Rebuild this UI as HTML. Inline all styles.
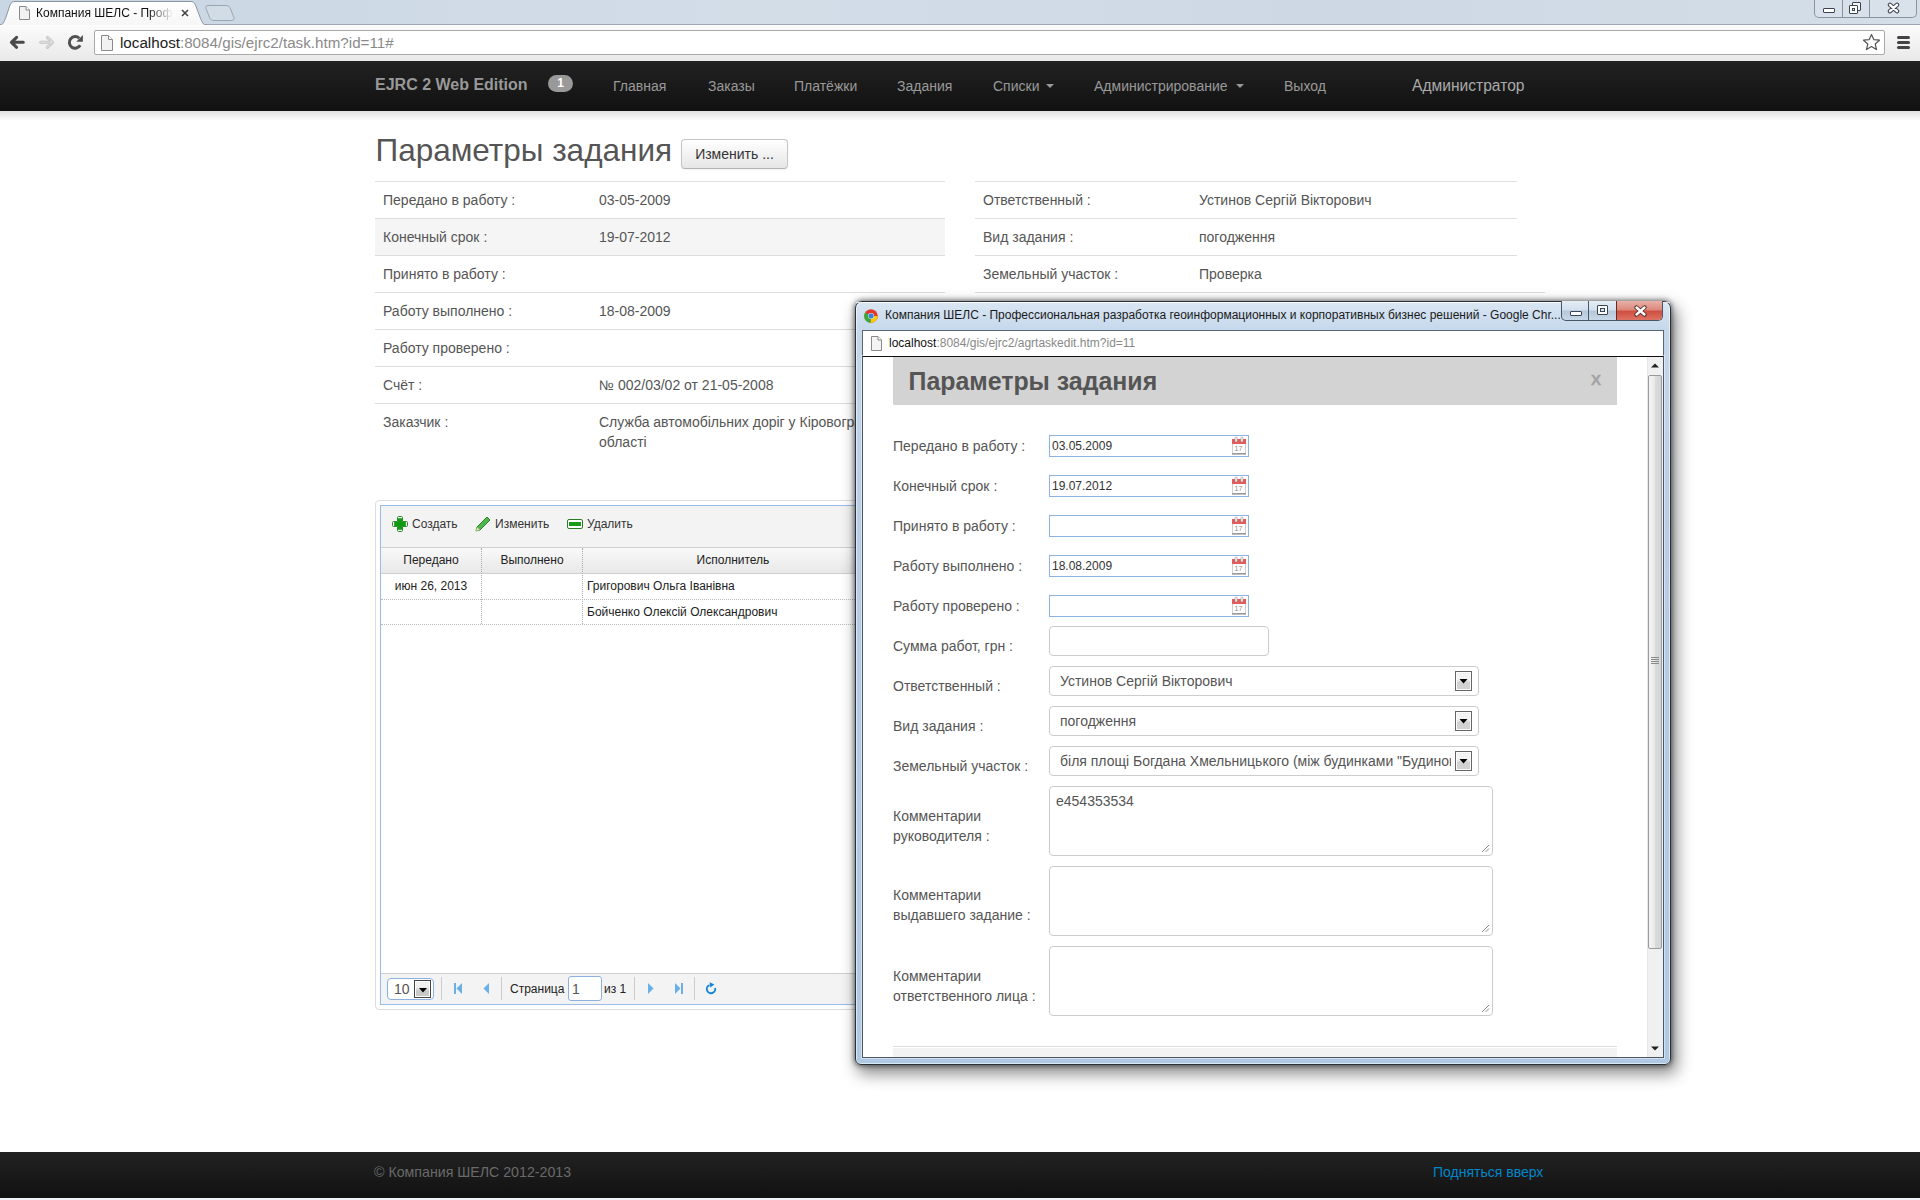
<!DOCTYPE html>
<html><head><meta charset="utf-8">
<style>
*{box-sizing:border-box}
html,body{margin:0;padding:0;width:1920px;height:1200px;overflow:hidden;background:#fff;font-family:"Liberation Sans",sans-serif;position:relative}
.a{position:absolute;white-space:nowrap}
/* browser chrome */
#tabstrip{left:0;top:0;width:1920px;height:25px;background:linear-gradient(90deg,#c9d6e3 0%,#d3dde8 40%,#cdd8e4 70%,#d4dee8 100%)}
#toolbar{left:0;top:24px;width:1920px;height:37px;background:linear-gradient(#fbfbfb,#e9e9e9);border-top:1px solid #9aa6b2}
#omni{left:94px;top:30px;width:1791px;height:25px;background:#fff;border:1px solid #a9a9a9;border-radius:2px}
#navbar{left:0;top:61px;width:1920px;height:50px;background:linear-gradient(#222,#111)}
#navshadow{left:0;top:111px;width:1920px;height:10px;background:linear-gradient(rgba(0,0,0,.12),rgba(0,0,0,0))}
.nav{color:#999;font-size:14px;top:76px;line-height:20px}
.lbl{font-size:14px;color:#555;line-height:20px}
.hr{height:1px;background:#ddd}
.gt{font-size:12px;color:#222;line-height:16px}
.gt2{font-size:12px;color:#333;line-height:16px}
#footer{left:0;top:1152px;width:1920px;height:46px;background:linear-gradient(#222,#111)}
</style></head><body>
<!-- TAB STRIP -->
<div class="a" id="tabstrip"></div>
<div class="a" id="toolbar"></div>
<div class="a" id="omni"></div>
<div class="a" style="left:120px;top:33px;font-size:15.2px;line-height:19px;color:#222">localhost<span style="color:#8a8a8a">:8084/gis/ejrc2/task.htm?id=11#</span></div>


<svg class="a" style="left:0;top:0" width="240" height="26" viewBox="0 0 240 26">
 <defs><linearGradient id="tg" x1="0" y1="0" x2="0" y2="1"><stop offset="0" stop-color="#ffffff"/><stop offset="1" stop-color="#f6f6f6"/></linearGradient></defs>
 <path d="M-2 25.5 C3 25.5 4 22 6 17 L10 5 C11.5 2 12.5 1.5 16 1.5 H190 C193 1.5 194 2 195.5 5 L200 17 C202 22 203 25.5 208 25.5 Z" fill="url(#tg)" stroke="#8a96a3" stroke-width="1"/>
 <path d="M208 5.5 H226 C228.5 5.5 229.5 6.5 230.5 9 L234 17.5 C234.5 19.5 233.5 20.5 231.5 20.5 H214 C211.5 20.5 210.5 19.5 209.5 17.5 L206 8.5 C205.5 6.5 206 5.5 208 5.5Z" fill="#d2dce6" stroke="#9aa6b2" stroke-width="1"/>
</svg>
<div class="a" style="left:0;top:25px;width:1920px;height:1px;background:#fdfdfd"></div>
<svg class="a" style="left:19px;top:6px" width="11" height="14" viewBox="0 0 11 14"><path d="M.5 .5h6.5l3.5 3.5v9.5H.5z" fill="#f2f2f2" stroke="#8a8a8a"/><path d="M7 .5V4h3.5" fill="#fff" stroke="#8a8a8a"/></svg>
<div class="a" style="left:36px;top:5px;width:137px;overflow:hidden;font-size:12px;line-height:16px;color:#111;-webkit-mask-image:linear-gradient(90deg,#000 82%,transparent)">Компания ШЕЛС - Профессиональная</div>
<svg class="a" style="left:181px;top:9px" width="8" height="8" viewBox="0 0 8 8"><path d="M1 1l6 6M7 1L1 7" stroke="#444" stroke-width="1.6"/></svg>
<!-- window caption buttons -->
<div class="a" style="left:1814px;top:0;width:103px;height:18px;border:1px solid #8993a0;border-top:none;border-radius:0 0 5px 5px;background:rgba(220,228,236,.6)"></div>
<div class="a" style="left:1842px;top:0;width:1px;height:17px;background:#8993a0"></div>
<div class="a" style="left:1869px;top:0;width:1px;height:17px;background:#8993a0"></div>
<div class="a" style="left:1823px;top:8px;width:12px;height:5px;border:1px solid #3c4350;border-radius:1px;background:#fff"></div>
<div class="a" style="left:1852px;top:2px;width:9px;height:9px;border:1px solid #3c4350;border-radius:1px;background:#f4f4f4"></div>
<div class="a" style="left:1849px;top:5px;width:9px;height:9px;border:1px solid #3c4350;border-radius:1px;background:#fff"><div class="a" style="left:2px;top:2px;width:3px;height:3px;border:1px solid #3c4350"></div></div>
<svg class="a" style="left:1887px;top:2px" width="13" height="12" viewBox="0 0 13 12"><path d="M3 2.8l7 6.4M10 2.8l-7 6.4" stroke="#3c4350" stroke-width="4.4" stroke-linecap="round"/><path d="M3 2.8l7 6.4M10 2.8l-7 6.4" stroke="#fff" stroke-width="2.4" stroke-linecap="round"/></svg>
<!-- toolbar icons -->
<svg class="a" style="left:9px;top:35px" width="17" height="15" viewBox="0 0 17 15"><path d="M14.3 7.3H3M7.6 2.3L2.4 7.3l5.2 5" fill="none" stroke="#4a4a4a" stroke-width="3" stroke-linecap="round" stroke-linejoin="round"/></svg>
<svg class="a" style="left:38px;top:35px" width="17" height="15" viewBox="0 0 17 15"><path d="M2.6 7.3H14M9.4 2.3l5.2 5-5.2 5" fill="none" stroke="#c4c4c4" stroke-width="3" stroke-linecap="round" stroke-linejoin="round"/><path d="M2.6 7.3H14M9.4 2.3l5.2 5-5.2 5" fill="none" stroke="#dcdcdc" stroke-width="1.4" stroke-linecap="round" stroke-linejoin="round"/></svg>
<svg class="a" style="left:67px;top:34px" width="17" height="17" viewBox="0 0 17 17"><path d="M13.17 11.3A5.8 5.8 0 1 1 12.25 4.3" fill="none" stroke="#505050" stroke-width="3"/><path d="M9.2 7.8H15.9V1.1z" fill="#505050"/></svg>
<svg class="a" style="left:101px;top:35px" width="12" height="16" viewBox="0 0 12 16"><path d="M.5 .5h7l4 4v11H.5z" fill="#f2f2f2" stroke="#8a8a8a"/><path d="M7.5 .5V4.5h4" fill="#fff" stroke="#8a8a8a"/></svg>
<svg class="a" style="left:1862px;top:33px" width="19" height="19" viewBox="0 0 19 19"><path d="M9.5 1.5l2.4 5.2 5.6.5-4.3 3.8 1.3 5.6-5-3-5 3 1.3-5.6L1.5 7.2l5.6-.5z" fill="#fff" stroke="#555" stroke-width="1.2" stroke-linejoin="round"/></svg>
<div class="a" style="left:1897px;top:36px;width:13px;height:3px;border-radius:1.5px;background:#444;box-shadow:0 5px 0 #444,0 10px 0 #444"></div>
<!-- bottom strip -->
<div class="a" style="left:0;top:1198px;width:1920px;height:2px;background:#eef2f6"></div>

<!-- NAVBAR -->
<div class="a" id="navbar"></div>
<div class="a" id="navshadow"></div>
<div class="a" style="left:375px;top:75px;font-size:16px;font-weight:bold;color:#999;line-height:20px">EJRC 2 Web Edition</div>
<div class="a" style="left:548px;top:75px;width:25px;height:17px;border-radius:9px;background:#999;color:#fff;font-size:12px;font-weight:bold;text-align:center;line-height:17px">1</div>
<div class="a nav" style="left:613px">Главная</div>
<div class="a nav" style="left:708px">Заказы</div>
<div class="a nav" style="left:794px">Платёжки</div>
<div class="a nav" style="left:897px">Задания</div>
<div class="a nav" style="left:993px">Списки</div>
<div class="a nav" style="left:1094px">Администрирование</div>
<div class="a nav" style="left:1284px">Выход</div>
<div class="a" style="left:1412px;top:76px;font-size:15.6px;color:#aaa;line-height:20px">Администратор</div>


<!-- nav carets -->
<svg class="a" style="left:1046px;top:84px" width="8" height="4"><path d="M0 0h8L4 4z" fill="#999"/></svg>
<svg class="a" style="left:1236px;top:84px" width="8" height="4"><path d="M0 0h8L4 4z" fill="#999"/></svg>

<!-- MAIN CONTENT -->
<div class="a" style="left:375.5px;top:130px;font-size:31.5px;color:#555;line-height:40px">Параметры задания</div>
<div class="a" style="left:681px;top:139px;width:107px;height:30px;border:1px solid #c5c5c5;border-bottom-color:#b3b3b3;border-radius:4px;background:linear-gradient(#fff,#e6e6e6);box-shadow:inset 0 1px 0 rgba(255,255,255,.2),0 1px 2px rgba(0,0,0,.05);font-size:14px;color:#333;text-align:center;line-height:28px">Изменить ...</div>
<div class="a" style="left:375px;top:218px;width:570px;height:37px;background:#f5f5f5"></div>
<div class="a hr" style="left:375px;top:181px;width:570px"></div>
<div class="a lbl" style="left:383px;top:190px">Передано в работу :</div>
<div class="a lbl" style="left:599px;top:190px">03-05-2009</div>
<div class="a hr" style="left:375px;top:218px;width:570px"></div>
<div class="a lbl" style="left:383px;top:227px">Конечный срок :</div>
<div class="a lbl" style="left:599px;top:227px">19-07-2012</div>
<div class="a hr" style="left:375px;top:255px;width:570px"></div>
<div class="a lbl" style="left:383px;top:264px">Принято в работу :</div>
<div class="a hr" style="left:375px;top:292px;width:570px"></div>
<div class="a lbl" style="left:383px;top:301px">Работу выполнено :</div>
<div class="a lbl" style="left:599px;top:301px">18-08-2009</div>
<div class="a hr" style="left:375px;top:329px;width:570px"></div>
<div class="a lbl" style="left:383px;top:338px">Работу проверено :</div>
<div class="a hr" style="left:375px;top:366px;width:570px"></div>
<div class="a lbl" style="left:383px;top:375px">Счёт :</div>
<div class="a lbl" style="left:599px;top:375px">№ 002/03/02 от 21-05-2008</div>
<div class="a hr" style="left:375px;top:403px;width:570px"></div>
<div class="a lbl" style="left:383px;top:412px">Заказчик :</div>
<div class="a lbl" style="left:599px;top:412px">Служба автомобільних доріг у Кіровоградській<br>області</div>
<div class="a hr" style="left:975px;top:181px;width:542px"></div>
<div class="a lbl" style="left:983px;top:190px">Ответственный :</div>
<div class="a lbl" style="left:1199px;top:190px">Устинов Сергій Вікторович</div>
<div class="a hr" style="left:975px;top:218px;width:542px"></div>
<div class="a lbl" style="left:983px;top:227px">Вид задания :</div>
<div class="a lbl" style="left:1199px;top:227px">погодження</div>
<div class="a hr" style="left:975px;top:255px;width:542px"></div>
<div class="a lbl" style="left:983px;top:264px">Земельный участок :</div>
<div class="a lbl" style="left:1199px;top:264px">Проверка</div>
<div class="a hr" style="left:975px;top:292px;width:570px"></div>


<!-- GRID -->
<div class="a" style="left:375px;top:500px;width:570px;height:510px;border:1px solid #ddd;border-radius:4px;background:#fff"></div>
<div class="a" style="left:380px;top:505px;width:560px;height:500px;border:1px solid #99bbe8;background:#fff"></div>
<div class="a" style="left:381px;top:506px;width:558px;height:41px;background:#f3f3f3"></div>
<div class="a" style="left:381px;top:547px;width:558px;height:1px;background:#d0d0d0"></div>
<div class="a" style="left:381px;top:548px;width:558px;height:25px;background:linear-gradient(#f9f9f9,#e8e8e8)"></div>
<div class="a" style="left:381px;top:573px;width:558px;height:1px;background:#d0d0d0"></div>
<div class="a" style="left:481px;top:548px;width:0;height:76px;border-left:1px dotted #aaa"></div>
<div class="a" style="left:582px;top:548px;width:0;height:76px;border-left:1px dotted #aaa"></div>
<div class="a" style="left:381px;top:599px;width:558px;height:0;border-top:1px dotted #bbb"></div>
<div class="a" style="left:381px;top:624px;width:558px;height:0;border-top:1px dotted #bbb"></div>
<div class="a gt" style="left:381px;top:552px;width:100px;text-align:center">Передано</div>
<div class="a gt" style="left:482px;top:552px;width:100px;text-align:center">Выполнено</div>
<div class="a gt" style="left:583px;top:552px;width:300px;text-align:center">Исполнитель</div>
<div class="a gt" style="left:381px;top:578px;width:100px;text-align:center">июн 26, 2013</div>
<div class="a gt" style="left:587px;top:578px">Григорович Ольга Іванівна</div>
<div class="a gt" style="left:587px;top:604px">Бойченко Олексій Олександрович</div>
<!-- toolbar buttons -->
<svg class="a" style="left:392px;top:516px" width="16" height="16" viewBox="0 0 16 16"><path d="M5.5 1.5q0-1 1-1h3q1 0 1 1v4h4q1 0 1 1v3q0 1-1 1h-4v4q0 1-1 1h-3q-1 0-1-1v-4h-4q-1 0-1-1v-3q0-1 1-1h4z" fill="#fff" stroke="#2f8a2f"/><path d="M5.8 2.2h4.4v3.6h3.6v4.4h-3.6v3.6H5.8v-3.6H2.2V5.8h3.6z" fill="#119a11"/></svg>
<div class="a gt2" style="left:412px;top:516px">Создать</div>
<svg class="a" style="left:475px;top:516px" width="16" height="16" viewBox="0 0 16 16"><path d="M1 15l1-4L12 1l3 3L5 14z" fill="#4cb84c" stroke="#2f7f2f" stroke-width="1"/><path d="M1 15l1-4 3 3z" fill="#e8e0b0"/></svg>
<div class="a gt2" style="left:495px;top:516px">Изменить</div>
<svg class="a" style="left:567px;top:517px" width="16" height="14" viewBox="0 0 16 14"><rect x=".5" y="2.5" width="15" height="9" rx="1.5" fill="#fff" stroke="#2a7a2a"/><rect x="2" y="5" width="12" height="4" fill="#1a9a1a"/></svg>
<div class="a gt2" style="left:587px;top:516px">Удалить</div>
<!-- pager -->
<div class="a" style="left:381px;top:973px;width:558px;height:1px;background:#d0d0d0"></div>
<div class="a" style="left:381px;top:974px;width:558px;height:30px;background:#f3f3f3"></div>
<div class="a" style="left:387px;top:978px;width:47px;height:22px;border:1px solid #8cb0e0;border-radius:4px;background:#fff"></div>
<div class="a" style="left:394px;top:979px;font-size:14px;color:#555;line-height:20px">10</div>
<div class="a" style="left:414px;top:980px;width:17px;height:18px;border:1px solid #444;background:#fff;padding:1px"><div style="width:100%;height:100%;background:linear-gradient(#f0f0f0 35%,#c9c9c9 65%)"></div></div>
<svg class="a" style="left:418.5px;top:988px" width="8" height="4.5"><path d="M0 0h8L4 4.5z" fill="#000"/></svg>
<div class="a" style="left:441px;top:977px;width:1px;height:23px;background:#ccc"></div>
<svg class="a" style="left:453px;top:983px" width="10" height="11"><rect x="1" y="0" width="2" height="11" fill="#6ab0e8"/><path d="M9 0v11L3.5 5.5z" fill="#6ab0e8"/></svg>
<svg class="a" style="left:482px;top:983px" width="8" height="11"><path d="M7 0v11L1.5 5.5z" fill="#6ab0e8"/></svg>
<div class="a" style="left:501px;top:977px;width:1px;height:23px;background:#ccc"></div>
<div class="a gt" style="left:510px;top:981px">Страница</div>
<div class="a" style="left:568px;top:976px;width:34px;height:25px;border:1px solid #8cb0e0;border-radius:3px;background:#fff"></div>
<div class="a" style="left:572px;top:979px;font-size:14px;color:#555;line-height:20px">1</div>
<div class="a gt" style="left:604px;top:981px">из 1</div>
<div class="a" style="left:634px;top:977px;width:1px;height:23px;background:#ccc"></div>
<svg class="a" style="left:647px;top:983px" width="8" height="11"><path d="M1 0v11L6.5 5.5z" fill="#6ab0e8"/></svg>
<svg class="a" style="left:674px;top:983px" width="10" height="11"><path d="M1 0v11L6.5 5.5z" fill="#6ab0e8"/><rect x="7" y="0" width="2" height="11" fill="#6ab0e8"/></svg>
<div class="a" style="left:694px;top:977px;width:1px;height:23px;background:#ccc"></div>
<svg class="a" style="left:700px;top:978px" width="22" height="22" viewBox="0 0 22 22"><path d="M15.06 9.91A4.2 4.2 0 1 1 9.56 7.05" fill="none" stroke="#1583d8" stroke-width="1.9"/><path d="M9.6 4.3L14.4 6.6 10.4 9.4z" fill="#1583d8"/></svg>

<!-- FOOTER -->
<div class="a" id="footer"></div>
<div class="a" style="left:374px;top:1162px;font-size:14.2px;color:#6a6a6a;line-height:20px">© Компания ШЕЛС 2012-2013</div>
<div class="a" style="left:1433px;top:1162px;font-size:14px;color:#08c;line-height:20px">Подняться вверх</div>


<!-- POPUP WINDOW -->
<div class="a" style="left:855px;top:301px;width:816px;height:764px;border-radius:7px 7px 6px 6px;box-shadow:inset 0 0 0 1px rgba(255,255,255,.55),0 0 5px 1px rgba(0,0,0,.5),4px 7px 16px 2px rgba(0,0,0,.45);background:linear-gradient(#d9e6f3,#c4d7eb 4%,#b7cde6 30%,#b0c9e3 100%);border:1px solid #2a3038"></div>
<div class="a" style="left:856px;top:302px;width:814px;height:1px;background:rgba(255,255,255,.7);border-radius:6px 6px 0 0"></div>
<!-- caption buttons -->
<div class="a" style="left:1561px;top:301px;width:102px;height:20px;border:1px solid #4a5566;border-top:none;border-radius:0 0 5px 5px;overflow:hidden;background:linear-gradient(#e4edf6,#d3e0ee 45%,#b7c8da 55%,#c9d8e8)">
 <div class="a" style="left:54px;top:0;width:47px;height:19px;background:linear-gradient(#eab0a6,#dc8a7e 45%,#cf5040 55%,#dd7264);border-left:1px solid #6a2a20"></div>
 <div class="a" style="left:26px;top:0;width:1px;height:19px;background:#4a5566"></div>
</div>
<div class="a" style="left:1570px;top:311px;width:12px;height:5px;background:#fff;border:1px solid #3b4452;border-radius:1px"></div>
<div class="a" style="left:1597px;top:305px;width:11px;height:10px;border:1px solid #3b4452;background:#fff;border-radius:1px"><div class="a" style="left:2px;top:2px;width:5px;height:4px;border:1px solid #3b4452;background:#dde6ef"></div></div>
<svg class="a" style="left:1634px;top:305px" width="13" height="12" viewBox="0 0 13 12"><path d="M2.5 2.5l8 7M10.5 2.5l-8 7" stroke="#4a2a28" stroke-width="4.2" stroke-linecap="round"/><path d="M2.5 2.5l8 7M10.5 2.5l-8 7" stroke="#fff" stroke-width="2.4" stroke-linecap="round"/></svg>
<!-- chrome icon + title -->
<svg class="a" style="left:864px;top:309px" width="14" height="14" viewBox="0 0 14 14"><circle cx="7" cy="7" r="6.8" fill="#e23a2e"/><path d="M7 7L13.8 7A6.8 6.8 0 0 1 6.4 13.77z" fill="#f8cf0a"/><path d="M7 7L6.4 13.77A6.8 6.8 0 0 1 1.1 3.6z" fill="#3aab3a"/><circle cx="7" cy="7" r="3" fill="#d8e8f4"/><circle cx="7" cy="7" r="2.5" fill="#3a7fd8"/></svg>
<div class="a" style="left:885px;top:308px;font-size:12px;line-height:14px;color:#1a1a1a">Компания ШЕЛС - Профессиональная разработка геоинформационных и корпоративных бизнес решений - Google Chr...</div>
<!-- address bar -->
<div class="a" style="left:862px;top:330px;width:802px;height:27px;border:1px solid #5c6673;border-bottom:1px solid #111;background:#fff"></div>
<svg class="a" style="left:871px;top:336px" width="11" height="15" viewBox="0 0 11 15"><path d="M.5 .5h6.5l3.5 3.5v10.5H.5z" fill="#f4f4f4" stroke="#8a8a8a"/><path d="M7 .5V4h3.5" fill="#fff" stroke="#8a8a8a"/></svg>
<div class="a" style="left:889px;top:336px;font-size:12px;line-height:14px;color:#111">localhost<span style="color:#888">:8084/gis/ejrc2/agrtaskedit.htm?id=11</span></div>
<!-- content -->
<div class="a" style="left:862px;top:356px;width:802px;height:702px;border:1px solid #4c5664;border-top-color:#111;box-shadow:0 0 0 1px rgba(255,255,255,.45)"></div>
<div class="a" style="left:863px;top:357px;width:800px;height:700px;background:#fff;overflow:hidden">
 <div class="a" style="left:30px;top:0;width:724px;height:48px;background:#d3d3d3"></div>
 <div class="a" style="left:45.5px;top:8px;font-size:24.9px;font-weight:bold;color:#555;line-height:32px">Параметры задания</div>
 <div class="a" style="left:728px;top:13px;font-size:15px;font-weight:bold;color:#a3a3a3;line-height:20px;-webkit-text-stroke:.4px #a3a3a3">X</div>
 <div class="a" style="left:30px;top:689px;width:724px;height:1px;background:#ddd"></div>
 <div class="a" style="left:30px;top:691px;width:724px;height:10px;background:#f3f3f3"></div>
 <!-- scrollbar -->
 <div class="a" style="left:784px;top:0;width:16px;height:700px;background:#f0f0f0;border-left:1px solid #e8e8e8"></div>
 <svg class="a" style="left:788px;top:6px" width="8" height="5"><path d="M0 4.5L4 .5 8 4.5z" fill="#222"/></svg>
 <svg class="a" style="left:788px;top:689px" width="8" height="5"><path d="M0 .5L4 4.5 8 .5z" fill="#222"/></svg>
 <div class="a" style="left:785px;top:18px;width:14px;height:574px;border:1px solid #9a9a9a;border-radius:2px;background:linear-gradient(90deg,#f4f4f4,#eaeaea 45%,#dadada 55%,#d4d4d4)"></div>
 <div class="a" style="left:788px;top:300px;width:8px;height:1px;background:#8a8a8a;box-shadow:0 2px 0 #8a8a8a,0 4px 0 #8a8a8a,0 6px 0 #8a8a8a"></div>
</div>
<div class="a lbl" style="left:893px;top:436px">Передано в работу :</div>
<div class="a" style="left:1049px;top:435px;width:200px;height:22px;border:1px solid #8db2e4;background:#fff"></div>
<div class="a" style="left:1052px;top:439px;font-size:12px;line-height:14px;color:#333">03.05.2009</div>
<svg class="a" style="left:1231px;top:436px" width="16" height="19" viewBox="0 0 16 19"><rect x="1.5" y="3.5" width="13" height="14.5" fill="#fff" stroke="#cfcfcf"/><rect x="1" y="3" width="14" height="5" fill="#e25a5a"/><rect x="1" y="17" width="14" height="1.5" fill="#9a9a9a"/><rect x="4" y="1" width="2.2" height="5" rx="1" fill="#f2f2f2" stroke="#999" stroke-width=".6"/><rect x="9.8" y="1" width="2.2" height="5" rx="1" fill="#f2f2f2" stroke="#999" stroke-width=".6"/><text x="3.6" y="14.6" font-size="7" font-family="Liberation Sans" fill="#8a8a8a">17</text></svg>
<div class="a lbl" style="left:893px;top:476px">Конечный срок :</div>
<div class="a" style="left:1049px;top:475px;width:200px;height:22px;border:1px solid #8db2e4;background:#fff"></div>
<div class="a" style="left:1052px;top:479px;font-size:12px;line-height:14px;color:#333">19.07.2012</div>
<svg class="a" style="left:1231px;top:476px" width="16" height="19" viewBox="0 0 16 19"><rect x="1.5" y="3.5" width="13" height="14.5" fill="#fff" stroke="#cfcfcf"/><rect x="1" y="3" width="14" height="5" fill="#e25a5a"/><rect x="1" y="17" width="14" height="1.5" fill="#9a9a9a"/><rect x="4" y="1" width="2.2" height="5" rx="1" fill="#f2f2f2" stroke="#999" stroke-width=".6"/><rect x="9.8" y="1" width="2.2" height="5" rx="1" fill="#f2f2f2" stroke="#999" stroke-width=".6"/><text x="3.6" y="14.6" font-size="7" font-family="Liberation Sans" fill="#8a8a8a">17</text></svg>
<div class="a lbl" style="left:893px;top:516px">Принято в работу :</div>
<div class="a" style="left:1049px;top:515px;width:200px;height:22px;border:1px solid #8db2e4;background:#fff"></div>
<svg class="a" style="left:1231px;top:516px" width="16" height="19" viewBox="0 0 16 19"><rect x="1.5" y="3.5" width="13" height="14.5" fill="#fff" stroke="#cfcfcf"/><rect x="1" y="3" width="14" height="5" fill="#e25a5a"/><rect x="1" y="17" width="14" height="1.5" fill="#9a9a9a"/><rect x="4" y="1" width="2.2" height="5" rx="1" fill="#f2f2f2" stroke="#999" stroke-width=".6"/><rect x="9.8" y="1" width="2.2" height="5" rx="1" fill="#f2f2f2" stroke="#999" stroke-width=".6"/><text x="3.6" y="14.6" font-size="7" font-family="Liberation Sans" fill="#8a8a8a">17</text></svg>
<div class="a lbl" style="left:893px;top:556px">Работу выполнено :</div>
<div class="a" style="left:1049px;top:555px;width:200px;height:22px;border:1px solid #8db2e4;background:#fff"></div>
<div class="a" style="left:1052px;top:559px;font-size:12px;line-height:14px;color:#333">18.08.2009</div>
<svg class="a" style="left:1231px;top:556px" width="16" height="19" viewBox="0 0 16 19"><rect x="1.5" y="3.5" width="13" height="14.5" fill="#fff" stroke="#cfcfcf"/><rect x="1" y="3" width="14" height="5" fill="#e25a5a"/><rect x="1" y="17" width="14" height="1.5" fill="#9a9a9a"/><rect x="4" y="1" width="2.2" height="5" rx="1" fill="#f2f2f2" stroke="#999" stroke-width=".6"/><rect x="9.8" y="1" width="2.2" height="5" rx="1" fill="#f2f2f2" stroke="#999" stroke-width=".6"/><text x="3.6" y="14.6" font-size="7" font-family="Liberation Sans" fill="#8a8a8a">17</text></svg>
<div class="a lbl" style="left:893px;top:596px">Работу проверено :</div>
<div class="a" style="left:1049px;top:595px;width:200px;height:22px;border:1px solid #8db2e4;background:#fff"></div>
<svg class="a" style="left:1231px;top:596px" width="16" height="19" viewBox="0 0 16 19"><rect x="1.5" y="3.5" width="13" height="14.5" fill="#fff" stroke="#cfcfcf"/><rect x="1" y="3" width="14" height="5" fill="#e25a5a"/><rect x="1" y="17" width="14" height="1.5" fill="#9a9a9a"/><rect x="4" y="1" width="2.2" height="5" rx="1" fill="#f2f2f2" stroke="#999" stroke-width=".6"/><rect x="9.8" y="1" width="2.2" height="5" rx="1" fill="#f2f2f2" stroke="#999" stroke-width=".6"/><text x="3.6" y="14.6" font-size="7" font-family="Liberation Sans" fill="#8a8a8a">17</text></svg>
<div class="a lbl" style="left:893px;top:636px">Сумма работ, грн :</div>
<div class="a" style="left:1049px;top:626px;width:220px;height:30px;border:1px solid #ccc;border-radius:4px;background:#fff"></div>
<div class="a lbl" style="left:893px;top:676px">Ответственный :</div>
<div class="a" style="left:1049px;top:666px;width:430px;height:30px;border:1px solid #ccc;border-radius:4px;background:#fff"></div>
<div class="a" style="left:1060px;top:671px;width:391px;overflow:hidden;font-size:14px;line-height:20px;color:#555">Устинов Сергій Вікторович</div>
<div class="a" style="left:1455px;top:671px;width:17px;height:20px;border:1px solid #666;background:#fff;padding:1px"><div style="width:100%;height:100%;background:linear-gradient(#f3f3f3 40%,#d2d2d2 60%)"></div></div>
<svg class="a" style="left:1459px;top:679px" width="9" height="5"><path d="M.5 0h8L4.5 4.5z" fill="#000"/></svg>
<div class="a lbl" style="left:893px;top:716px">Вид задания :</div>
<div class="a" style="left:1049px;top:706px;width:430px;height:30px;border:1px solid #ccc;border-radius:4px;background:#fff"></div>
<div class="a" style="left:1060px;top:711px;width:391px;overflow:hidden;font-size:14px;line-height:20px;color:#555">погодження</div>
<div class="a" style="left:1455px;top:711px;width:17px;height:20px;border:1px solid #666;background:#fff;padding:1px"><div style="width:100%;height:100%;background:linear-gradient(#f3f3f3 40%,#d2d2d2 60%)"></div></div>
<svg class="a" style="left:1459px;top:719px" width="9" height="5"><path d="M.5 0h8L4.5 4.5z" fill="#000"/></svg>
<div class="a lbl" style="left:893px;top:756px">Земельный участок :</div>
<div class="a" style="left:1049px;top:746px;width:430px;height:30px;border:1px solid #ccc;border-radius:4px;background:#fff"></div>
<div class="a" style="left:1060px;top:751px;width:391px;overflow:hidden;font-size:14px;line-height:20px;color:#555">біля площі Богдана Хмельницького (між будинками &quot;Будинок</div>
<div class="a" style="left:1455px;top:751px;width:17px;height:20px;border:1px solid #666;background:#fff;padding:1px"><div style="width:100%;height:100%;background:linear-gradient(#f3f3f3 40%,#d2d2d2 60%)"></div></div>
<svg class="a" style="left:1459px;top:759px" width="9" height="5"><path d="M.5 0h8L4.5 4.5z" fill="#000"/></svg>
<div class="a lbl" style="left:893px;top:806px">Комментарии<br>руководителя :</div>
<div class="a" style="left:1049px;top:786px;width:444px;height:70px;border:1px solid #ccc;border-radius:4px;background:#fff"></div>
<svg class="a" style="left:1481px;top:844px" width="9" height="9"><path d="M8 1L1 8M8 4.5L4.5 8" stroke="#888" stroke-width="1"/></svg>
<div class="a" style="left:1056px;top:791px;font-size:14px;line-height:20px;color:#555">e454353534</div>
<div class="a lbl" style="left:893px;top:885px">Комментарии<br>выдавшего задание :</div>
<div class="a" style="left:1049px;top:866px;width:444px;height:70px;border:1px solid #ccc;border-radius:4px;background:#fff"></div>
<svg class="a" style="left:1481px;top:924px" width="9" height="9"><path d="M8 1L1 8M8 4.5L4.5 8" stroke="#888" stroke-width="1"/></svg>
<div class="a lbl" style="left:893px;top:966px">Комментарии<br>ответственного лица :</div>
<div class="a" style="left:1049px;top:946px;width:444px;height:70px;border:1px solid #ccc;border-radius:4px;background:#fff"></div>
<svg class="a" style="left:1481px;top:1004px" width="9" height="9"><path d="M8 1L1 8M8 4.5L4.5 8" stroke="#888" stroke-width="1"/></svg>

</body></html>
